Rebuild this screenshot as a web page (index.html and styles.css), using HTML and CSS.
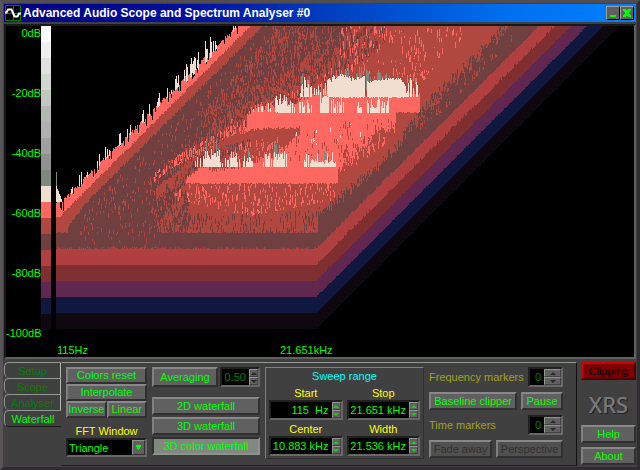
FILE: index.html
```
<!DOCTYPE html>
<html lang="en">
<head>
    <meta charset="UTF-8">
    <meta name="viewport" content="width=device-width, initial-scale=1.0">
    <title>Advanced Audio Scope and Spectrum Analyser #0</title>
    <link rel="stylesheet" href="styles.css">
</head>
<body>

<div class="window">
  <header class="titlebar">
    <svg class="logo" width="16" height="16" viewBox="0 0 16 16">
      <rect width="16" height="16" fill="#000"/>
      <path d="M0.5 0.5h15v15h-15zM8.5 0v16M0 8.5h16" fill="none" stroke="#008000" stroke-width="1"/>
      <path d="M0 7.5H1.5L3 4.5H6.5L8 8L9.5 11.5H12.5L14 8.5H16" fill="none" stroke="#fff" stroke-width="2"/>
    </svg>
    <h1>Advanced Audio Scope and Spectrum Analyser #0</h1>
    <button class="sys" aria-label="Minimize">
      <svg width="10" height="10" viewBox="0 0 10 10"><path d="M2 7h6v2H2z" fill="#0f0"/></svg>
    </button>
    <button class="sys" aria-label="Close">
      <svg width="10" height="10" viewBox="0 0 10 10"><path d="M1 1h3v1h2V1h3v2H8v1H7v2h1v1h1v2H6V8H4v1H1V7h1V6h1V4H2V3H1z" fill="#0f0"/></svg>
    </button>
  </header>

  <main class="scope">
    <div class="plot">
      <div class="levels">
        <span>0dB</span>
        <span>-20dB</span>
        <span>-40dB</span>
        <span>-60dB</span>
        <span>-80dB</span>
        <span>-100dB</span>
      </div>
      <div class="scale"></div>
      <div class="trace"><canvas id="waterfall" width="574" height="304"></canvas></div>
    </div>
    <div class="freqs">
      <span class="freq">115Hz</span>
      <span class="freq">21.651kHz</span>
    </div>
  </main>

  <div class="controls">
    <nav class="tabs">
      <button class="tab">Setup</button>
      <button class="tab">Scope</button>
      <button class="tab">Analyser</button>
      <button class="tab active">Waterfall</button>
    </nav>

    <section class="panel">
      <div class="col display">
        <button class="btn">Colors reset</button>
        <button class="btn">Interpolate</button>
        <div class="pair">
          <button class="btn">Inverse</button>
          <button class="btn">Linear</button>
        </div>
        <label class="caption" for="fft">FFT Window</label>
        <div class="field combo">
          <select id="fft"><option>Triangle</option></select>
          <span class="drop"><svg width="7" height="6" viewBox="0 0 7 6"><path d="M1 0h5v2H5v2H4v1H3V4H2V2H1z" fill="#0f0"/></svg></span>
        </div>
      </div>

      <div class="col modes">
        <div class="averaging">
          <button class="btn">Averaging</button>
          <div class="field off">
            <input type="text" value="0.50" aria-label="Averaging factor">
            <span class="spin"><button class="up" aria-label="Up"></button><button class="down" aria-label="Down"></button></span>
          </div>
        </div>
        <button class="btn">2D waterfall</button>
        <button class="btn">3D waterfall</button>
        <button class="btn pressed">3D color waterfall</button>
      </div>

      <div class="sweep">
        <h2>Sweep range</h2>
        <div class="cell">
          <label class="caption" for="start">Start</label>
          <div class="field">
            <input type="text" id="start" value="115  Hz">
            <span class="spin"><button class="up" aria-label="Up"></button><button class="down" aria-label="Down"></button></span>
          </div>
        </div>
        <div class="cell">
          <label class="caption" for="stop">Stop</label>
          <div class="field">
            <input type="text" id="stop" value="21.651 kHz">
            <span class="spin"><button class="up" aria-label="Up"></button><button class="down" aria-label="Down"></button></span>
          </div>
        </div>
        <div class="cell">
          <label class="caption" for="center">Center</label>
          <div class="field">
            <input type="text" id="center" value="10.883 kHz">
            <span class="spin"><button class="up" aria-label="Up"></button><button class="down" aria-label="Down"></button></span>
          </div>
        </div>
        <div class="cell">
          <label class="caption" for="width">Width</label>
          <div class="field">
            <input type="text" id="width" value="21.536 kHz">
            <span class="spin"><button class="up" aria-label="Up"></button><button class="down" aria-label="Down"></button></span>
          </div>
        </div>
      </div>

      <div class="col markers">
        <div class="row">
          <label for="fmark">Frequency markers</label>
          <div class="field off count">
            <input type="text" id="fmark" value="0">
            <span class="spin"><button class="up" aria-label="Up"></button><button class="down" aria-label="Down"></button></span>
          </div>
        </div>
        <div class="row">
          <button class="btn">Baseline clipper</button>
          <button class="btn">Pause</button>
        </div>
        <div class="row">
          <label for="tmark">Time markers</label>
          <div class="field off count">
            <input type="text" id="tmark" value="0">
            <span class="spin"><button class="up" aria-label="Up"></button><button class="down" aria-label="Down"></button></span>
          </div>
        </div>
        <div class="row">
          <button class="btn" disabled>Fade away</button>
          <button class="btn" disabled>Perspective</button>
        </div>
      </div>
    </section>

    <aside class="side">
      <button class="btn clip">Clipping</button>
      <div class="brand">XRS</div>
      <button class="btn">Help</button>
      <button class="btn">About</button>
    </aside>
  </div>
</div>

<script src="waterfall.js"></script>
</body>
</html>
```
FILE: styles.css
```
* {
    box-sizing: border-box;
}
body {
    margin: 0;
    background: #404040;
    font-family: "Liberation Sans", Arial, sans-serif;
    font-size: 11px;
    line-height: 14px;
    color: #0f0;
}
button, input, select {
    font: inherit;
    color: inherit;
    margin: 0;
    padding: 0;
}
h1, h2 {
    margin: 0;
    font-size: 12px;
}
.window {
    min-height: 100vh;
    padding: 1px;
    border: 3px solid;
    border-color: #504c50 #302c30 #302c30 #585458;
    background: #404040;
}

/* title bar */
.titlebar {
    display: flex;
    align-items: center;
    height: 18px;
    padding: 0 2px 0 1px;
    background: linear-gradient(90deg, #000080, #0010a0 30%, #0040c0 52%, #0070f0 80%, #0080ff);
}
.titlebar h1 {
    flex: 1;
    margin-left: 2px;
    color: #fff;
    white-space: nowrap;
}
.sys {
    display: flex;
    align-items: center;
    justify-content: center;
    width: 14px;
    height: 14px;
    border: 1px solid;
    border-color: #a0a0a0 #000 #000 #a0a0a0;
    background: #606060;
}

/* scope */
.scope {
    margin: 2px 0 0 0;
    border: 2px solid;
    border-color: #181818 #606060 #606060 #181818;
    background: #000;
}
.plot {
    display: flex;
}
.levels {
    display: flex;
    flex-direction: column;
    justify-content: space-between;
    width: 35px;
    height: 314px;
    text-align: right;
    direction: rtl;
    white-space: nowrap;
}
.levels span {
    direction: ltr;
}
.scale {
    width: 10px;
    height: 304px;
    margin-right: 5px;
    background: linear-gradient(
        #fff 16px, #f0f0f0 16px 32px, #e0e0e0 32px 48px, #d0d8d0 48px 64px,
        #c0c8c0 64px 80px, #b0b8b0 80px 96px, #b0b0b0 96px 112px, #a0a0a0 112px 128px,
        #909090 128px 144px, #808880 144px 160px, #f0dfd0 160px 176px, #ff6860 176px 192px,
        #b04840 192px 208px, #704040 208px 224px, #b04040 224px 240px, #802f30 240px 256px,
        #602850 256px 272px, #101840 272px 288px, #10080f 288px);
}
.trace {
    flex: 1;
    min-width: 0;
    overflow: hidden;
}
.trace canvas {
    display: block;
}
.freqs {
    display: flex;
    padding: 3px 0 0 51px;
}
.freq {
    width: 223px;
}

/* controls */
.controls {
    display: flex;
    padding-top: 3px;
}
.tabs {
    width: 57px;
}
.tab {
    display: block;
    width: 57px;
    height: 16px;
    border: 1px solid #909890;
    border-right-color: #b0b8b0;
    border-bottom: 0;
    border-radius: 5px 0 0 5px;
    background: #404040;
    color: #008000;
}
.tab.active {
    height: 17px;
    border-right: 0;
    border-bottom: 1px solid #181c18;
    color: #0f0;
}
.panel {
    flex: 1;
    display: flex;
    gap: 5px;
    height: 104px;
    padding: 4px 13px 0 4px;
    border: 1px solid;
    border-color: #909890 #101010 #182018 transparent;
}
.col {
    display: flex;
    flex-direction: column;
}
.btn {
    height: 18px;
    padding: 0 2px;
    border: 2px solid;
    border-color: #888 #303030 #303030 #808080;
    background: #606060;
    line-height: 13px;
    white-space: nowrap;
}
.btn.pressed {
    border-color: #303030 #909090 #909090 #303030;
    background: #808880;
}
.btn:disabled {
    background: #505050;
    color: #303030;
}
.caption {
    color: #ff0;
    text-align: center;
}
.field {
    display: flex;
    height: 20px;
    border: 2px solid;
    border-color: #202020 #686868 #686868 #202020;
    background: #000;
}
.field input {
    flex: 1;
    width: 0;
    min-width: 0;
    border: 0;
    background: none;
    text-align: right;
    white-space: pre;
}
.field.off {
    color: #008000;
}
.spin {
    display: flex;
    flex-direction: column;
    width: 9px;
    margin-left: 3px;
}
.spin button {
    flex: 1;
    display: flex;
    align-items: center;
    justify-content: center;
    border: 1px solid;
    border-color: #909890 #404040 #404040 #909890;
    background: #606060;
}
.spin button::before {
    content: "";
    border: 3px solid transparent;
}
.spin .up::before {
    border-top: 0;
    border-bottom-color: #00e000;
}
.spin .down::before {
    border-bottom: 0;
    border-top-color: #00e000;
}
.off .up::before {
    border-bottom-color: #282828;
}
.off .down::before {
    border-top-color: #282828;
}

.display {
    width: 81px;
}
.display .btn {
    height: 17px;
}
.pair {
    display: flex;
}
.pair .btn {
    flex: 1;
    padding: 0;
}
.display .caption {
    margin: 6px 0 0;
}
.combo {
    height: 19px;
}
.combo select {
    flex: 1;
    width: 0;
    border: 0;
    padding-left: 1px;
    background: #000;
    appearance: none;
}
.drop {
    display: flex;
    align-items: center;
    justify-content: center;
    width: 13px;
    border: 1px solid;
    border-color: #909090 #303030 #303030 #909090;
    background: #606060;
    pointer-events: none;
}

.modes {
    width: 108px;
    gap: 2px;
}
.averaging {
    display: flex;
    gap: 2px;
    margin-bottom: 8px;
}
.averaging .btn {
    width: 66px;
    height: 20px;
}
.averaging .field {
    flex: 1;
}

.sweep {
    flex: 1;
    display: grid;
    grid-template-columns: 1fr 1fr;
    align-content: start;
    column-gap: 4px;
    height: 92px;
    padding: 0 3px;
    border: 1px solid;
    border-color: #808080 #303030 #303030 #808080;
}
.sweep h2 {
    grid-column: 1 / -1;
    margin: 1px 0 3px;
    font-size: 11px;
    font-weight: normal;
    line-height: 14px;
    color: #0ff;
    text-align: center;
}
.cell {
    display: flex;
    flex-direction: column;
    margin-bottom: 2px;
}

.markers {
    width: 134px;
    gap: 5px;
    color: #a0a020;
}
.row {
    display: flex;
    gap: 4px;
    justify-content: space-between;
    align-items: center;
    white-space: nowrap;
}
.row .btn {
    flex: 1 0 auto;
    color: #0f0;
}
.row .btn:disabled {
    color: #303030;
}
.count {
    width: 35px;
}
.count .spin {
    width: 17px;
}

.side {
    display: flex;
    flex-direction: column;
    width: 55px;
    margin-left: 4px;
    padding-bottom: 1px;
    gap: 4px;
}
.clip {
    border-color: #d00000 #500000 #500000 #d00000;
    background: #800000;
    color: #000;
}
.brand {
    flex: 1;
    padding-top: 6px;
    font-family: "Noto Sans", sans-serif;
    font-size: 22px;
    font-weight: 500;
    line-height: 28px;
    text-align: center;
    color: #787878;
    text-shadow: 1px 1px 0 #202020;
}
```
FILE: waterfall.js
```
var canvas = document.getElementById('waterfall');
var ctx = canvas.getContext('2d');

var GREY = '#808880', CREAM = '#f0dfd0', CORAL = '#ff6860', RUST = '#b04840', BROWN = '#704040';

// the plot starts at 56,26 in window coordinates
ctx.translate(-56, -26);

var seed = 7;
function rnd() {
  seed = (seed * 16807) % 2147483647;
  return seed / 2147483647;
}
function bar(x, top, bottom, color) {
  ctx.fillStyle = color;
  ctx.fillRect(Math.round(x), Math.round(top), 1, Math.round(bottom) - Math.round(top));
}
// point list -> y at x
function at(points, x) {
  for (var i = 1; i < points.length; i++) {
    var a = points[i - 1], b = points[i];
    if (x <= b[0]) return a[1] + (b[1] - a[1]) * (x - a[0]) / (b[0] - a[0]);
  }
  return points[points.length - 1][1];
}
// area between two curves, with ragged edges
function area(x0, x1, top, bottom, color, ragTop, ragBottom) {
  for (var x = x0; x < x1; x++) {
    var t = at(top, x) - rnd() * ragTop;
    var b = at(bottom, x) + rnd() * ragBottom;
    if (b > t) bar(x, t, b, color);
  }
}
// vertical streaks scattered between two curves
function streaks(x0, x1, top, bottom, color, density, len) {
  for (var x = x0; x < x1; x++) {
    var t = at(top, x), b = at(bottom, x);
    for (var y = t; y < b; y++) {
      if (rnd() < density) {
        var l = 1 + rnd() * len;
        bar(x, y, Math.min(b, y + l), color);
        y += l;
      }
    }
  }
}
// row of spectrum peaks standing on a base line
function peaks(x0, x1, base, heights, color, density) {
  for (var x = x0; x < x1; x++) {
    if (rnd() < density) bar(x, base - at(heights, x) * (0.3 + rnd() * 0.7), base, color);
  }
}

// noise floor bands, each trace one pixel up and to the right
var bands = [[329, '#10080f'], [313, '#101840'], [297, '#602850'], [281, '#802f30'], [265, '#b04040'], [249, BROWN], [233, RUST]];
bands.forEach(function (band, i) {
  for (var x = 56; x < 620; x++) {
    var shift = Math.max(0, x - 316);
    var jag = rnd() < 0.4 ? rnd() * (shift > 0 ? i - 1 : i > 4 ? 2 : 0) : 0;
    var y = band[0] - shift - jag;
    if (y > 26) bar(x, 26, y, band[1]);
  }
});

// dark slopes on both sides
area(68, 350, [[68, 228], [84, 206], [262, 28], [350, 26]], [[68, 235], [150, 235], [175, 190], [240, 125], [300, 96], [350, 26]], BROWN, 3, 8);
streaks(84, 350, [[84, 210], [270, 26], [350, 26]], [[84, 235], [150, 235], [240, 130], [300, 100], [350, 26]], RUST, 0.03, 4);
streaks(200, 350, [[200, 110], [280, 26], [350, 26]], [[200, 160], [240, 130], [300, 105], [350, 40]], RUST, 0.09, 7);
streaks(150, 345, [[150, 175], [300, 60], [345, 26]], [[150, 235], [215, 150], [310, 100], [345, 80]], RUST, 0.1, 8);
streaks(320, 385, [[320, 26], [385, 26]], [[320, 90], [385, 45]], BROWN, 0.09, 9);
area(318, 536, [[318, 222], [380, 172], [430, 114], [515, 26], [536, 26]], [[318, 245], [536, 28]], BROWN, 10, 0);
streaks(318, 520, [[318, 208], [380, 160], [430, 95], [500, 26], [520, 26]], [[318, 228], [380, 178], [430, 125], [520, 30]], BROWN, 0.11, 9);
streaks(420, 515, [[420, 122], [515, 30]], [[420, 134], [515, 38]], RUST, 0.05, 6);
streaks(150, 190, [[150, 190], [190, 190]], [[150, 233], [190, 233]], BROWN, 0.14, 9);
streaks(180, 320, [[180, 214], [320, 210]], [[180, 233], [320, 233]], BROWN, 0.05, 8);
streaks(80, 160, [[80, 226], [160, 226]], [[80, 248], [160, 248]], '#b04040', 0.015, 5);

// coral flecks
streaks(340, 470, [[340, 26], [470, 26]], [[340, 75], [420, 85], [440, 60], [470, 36]], CORAL, 0.03, 7);
streaks(175, 335, [[175, 183], [335, 183]], [[175, 200], [250, 216], [335, 200]], CORAL, 0.05, 7);
streaks(230, 340, [[230, 120], [340, 60]], [[230, 150], [340, 100]], CORAL, 0.02, 7);

// signal body
area(247, 420, [[247, 116], [260, 110], [290, 108], [315, 97], [420, 97]], [[247, 130], [320, 130], [396, 112], [420, 112]], CORAL, 8, 1);
area(235, 396, [[235, 140], [260, 118], [270, 113], [396, 113]], [[235, 158], [338, 168], [372, 136], [374, 128], [394, 126], [396, 114]], CORAL, 2, 7);
area(186, 338, [[186, 170], [200, 165], [338, 160]], [[186, 183], [338, 183]], CORAL, 6, 1);
streaks(154, 250, [[154, 172], [175, 156], [250, 115]], [[154, 182], [175, 166], [250, 132]], CORAL, 0.12, 7);
area(208, 300, [[208, 150], [250, 131], [300, 129]], [[208, 166], [240, 162], [275, 152], [300, 131]], RUST, 3, 7);
area(156, 240, [[156, 190], [200, 155], [240, 132]], [[156, 196], [180, 182], [200, 165], [240, 154]], RUST, 3, 4);
streaks(165, 250, [[165, 184], [200, 155], [250, 136]], [[165, 196], [200, 166], [250, 148]], BROWN, 0.1, 8);
streaks(245, 395, [[245, 132], [300, 128], [395, 114]], [[245, 160], [340, 162], [395, 122]], RUST, 0.018, 8);
streaks(225, 310, [[225, 145], [310, 132]], [[225, 160], [310, 155]], CORAL, 0.05, 7);
streaks(338, 385, [[338, 150], [385, 128]], [[338, 178], [385, 145]], CORAL, 0.04, 8);
streaks(339, 400, [[339, 150], [372, 132], [400, 116]], [[339, 182], [372, 150], [400, 130]], RUST, 0.05, 8);
streaks(296, 365, [[296, 128], [365, 116]], [[296, 148], [365, 136]], CREAM, 0.01, 7);

// peaks
[[276, 292, 20], [300, 312, 14], [320, 326, 22]].forEach(function (g) {
  peaks(g[0], g[1], 113, [[g[0], g[2]], [g[1], g[2]]], CREAM, 0.75);
});
peaks(276, 338, 113, [[276, 8], [338, 18]], CREAM, 0.3);
peaks(252, 280, 112, [[252, 6], [280, 16]], CREAM, 0.2);
peaks(300, 312, 95, [[300, 20], [306, 32], [312, 16]], GREY, 0.3);
peaks(300, 312, 97, [[300, 14], [306, 26], [312, 12]], CREAM, 0.8);
peaks(314, 328, 95, [[314, 8], [328, 18]], CREAM, 0.5);
peaks(332, 400, 90, [[332, 24], [345, 28], [364, 24], [400, 18]], GREY, 0.6);
area(327, 334, [[327, 84], [334, 80]], [[327, 96], [334, 97]], CREAM, 6, 1);
area(334, 365, [[334, 79], [346, 77], [350, 81], [365, 79]], [[334, 97], [365, 97]], CREAM, 4, 1);
area(367, 406, [[367, 84], [380, 81], [400, 81], [406, 89]], [[367, 97], [406, 97]], CREAM, 3, 1);
peaks(406, 419, 97, [[406, 10], [413, 26], [419, 6]], CREAM, 0.7);
[[332, 345, 18], [355, 362, 12], [367, 389, 15]].forEach(function (g) {
  peaks(g[0], g[1], 113, [[g[0], g[2]], [g[1], g[2]]], CREAM, 0.6);
});
area(322, 329, [[322, 98], [329, 98]], [[322, 113], [329, 113]], CREAM, 3, 0);
[[203, 220, 22], [230, 237, 22], [246, 252, 12], [265, 270, 20], [274, 285, 20], [310, 336, 10]].forEach(function (g) {
  peaks(g[0], g[1], 160, [[g[0], g[2]], [g[1], g[2]]], GREY, 0.25);
  area(g[0], g[1], [[g[0], 167 - g[2] / 3], [g[1], 167 - g[2] / 3]], [[g[0], 167], [g[1], 167]], CREAM, g[2] / 2, 0);
});
peaks(190, 338, 167, [[190, 10], [338, 16]], CREAM, 0.25);

// leading edge: black outside, coral rim, cream spikes
for (var x = 56; x < 276; x++) {
  var slope = x < 64 ? 202 : 263 - x;
  var rim = slope + (rnd() < 0.3 ? rnd() * 9 : rnd() * 3 - 2);
  var inner = Math.min(217, 275 - x + rnd() * 2);
  bar(x, 26, Math.max(26, rim), '#000');
  if (inner > 26) bar(x, Math.max(26, Math.min(rim, inner)), inner, CORAL);
  if (x > 64 && rnd() < 0.3) bar(x, Math.max(26, slope - 2 - rnd() * 9), Math.max(26, slope + 2), CREAM);
  if (x > 185 && x < 216 && rnd() < 0.4) bar(x, slope - 8 - rnd() * 10, slope + 5, CREAM);
}
bar(56, 172, 186, GREY);
area(56, 62, [[56, 186], [62, 201]], [[56, 202], [62, 202]], CREAM, 0, 0);
```
